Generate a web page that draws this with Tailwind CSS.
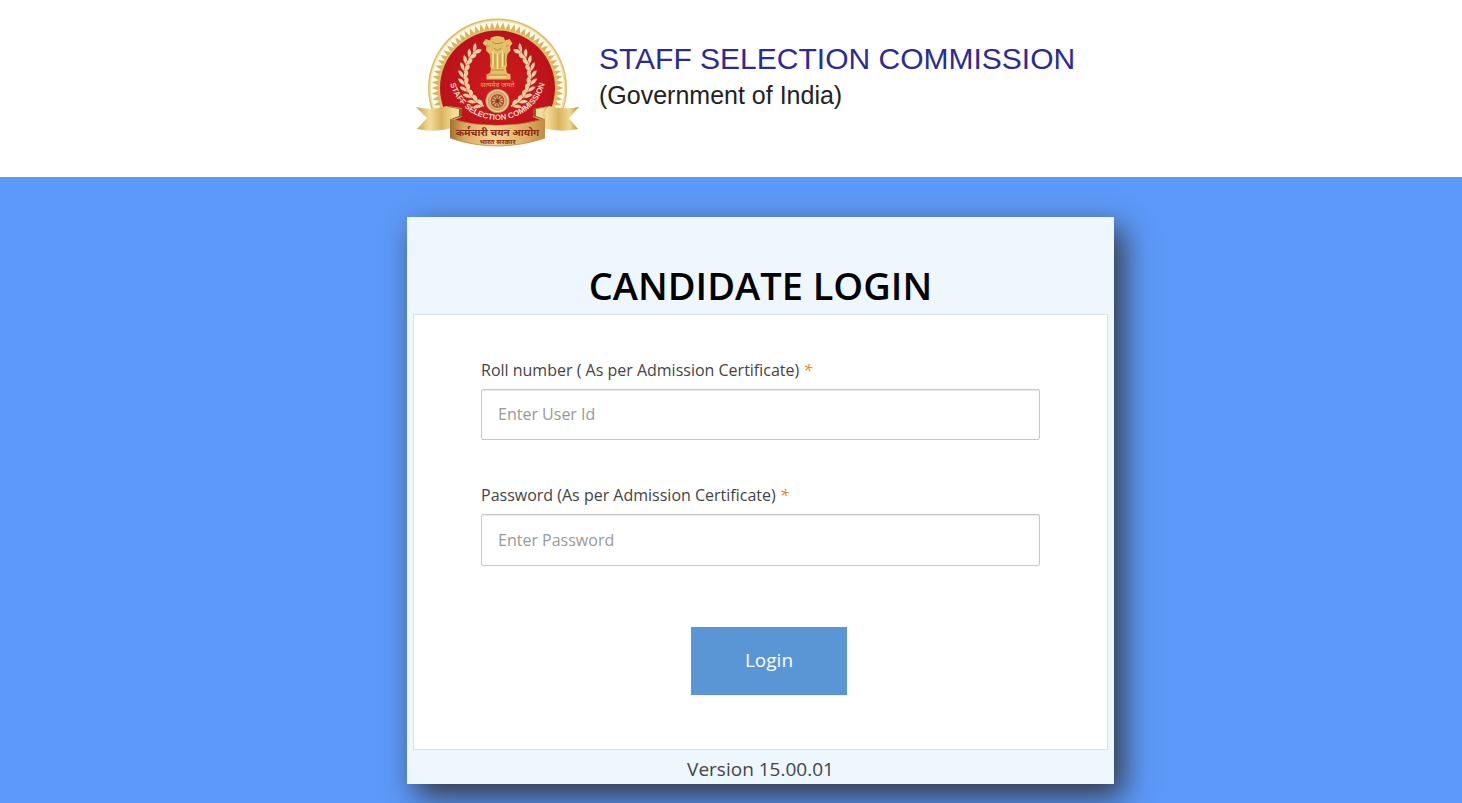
<!DOCTYPE html>
<html lang="en">
<head>
    <meta charset="UTF-8">
    <meta name="viewport" content="width=device-width, initial-scale=1.0">
    <title>Candidate Login</title>
    <script src="https://cdn.jsdelivr.net/npm/@tailwindcss/browser@4"></script>
</head>
<body class="min-h-screen flex flex-col bg-[#5c99f8] font-['Open_Sans',sans-serif] text-[#444]">

    <!-- Header: emblem and name -->
    <header class="bg-white h-[177px] pl-[59px]">
        <div class="w-full max-w-[719px] mx-auto pt-[5px] flex items-start">
            <svg class="w-[190px] h-[150px] shrink-0" viewBox="0 0 190 150" role="img" aria-label="Staff Selection Commission emblem">
                <defs>
                    <linearGradient id="gold" x1="0" x2="1" y1="0" y2="0">
                        <stop offset="0" stop-color="#c9a04c"/>
                        <stop offset=".3" stop-color="#f2dd98"/>
                        <stop offset=".55" stop-color="#d9b45f"/>
                        <stop offset=".8" stop-color="#efd88f"/>
                        <stop offset="1" stop-color="#b98d3d"/>
                    </linearGradient>
                    <linearGradient id="band" x1="0" x2="1" y1="0" y2="0">
                        <stop offset="0" stop-color="#a5702f"/>
                        <stop offset=".15" stop-color="#d9a960"/>
                        <stop offset=".45" stop-color="#f3d595"/>
                        <stop offset=".8" stop-color="#dfae62"/>
                        <stop offset="1" stop-color="#c08a42"/>
                    </linearGradient>
                    <radialGradient id="red">
                        <stop offset="0" stop-color="#cf1b20"/>
                        <stop offset="1" stop-color="#bb1219"/>
                    </radialGradient>
                    <path id="arc" d="M47.500 60V66A49 49 0 0 0 145.500 66V60"/>
                    <clipPath id="disc"><path d="M0 0H190V100L168 102L145 120H48L25 102L0 100Z"/></clipPath>
                </defs>
                <g clip-path="url(#disc)">
                    <circle cx="96.500" cy="83" r="69.500" fill="#d8bd70"/>
                    <circle cx="96.500" cy="83" r="68" fill="#f0e3ae"/>
                    <circle cx="96.500" cy="83" r="66.500" fill="#fdfae8"/>
                    <g id="rays" fill="#d3b65f"></g>
                    <circle cx="96.500" cy="83" r="59" fill="#dcc06d"/>
                    <circle cx="96.500" cy="83" r="57.500" fill="url(#red)"/>
                </g>
                <g id="laurel" fill="#e8cfa2"></g>
                <!-- Lion capital -->
                <path fill="#e3bf69" d="M90 32.500q6.500-3 13 0l1 3 4.500-1.500 3 4.500-2.500 3 .5 4-3 3.500-1 6 .5 5-1 4 1 4 3.500 1.500v5H85.500v-5l3.500-1.500 1-4-1-4 .5-5-1-6-3.500-3.500.5-4-4-3 3-4.500 4.500 1.500z"/>
                <path fill="none" stroke="#b0812f" stroke-width=".8" d="M91 37l3 1.500h5l3-1.500M92.500 43l4 2.500 4-2.500M85.500 40l3 1.500M108 40l-3 1.500M90 48v12M94 49v14M99 49v14M103.500 48v12M90 65h13M87 70h19"/>
                <path fill="none" stroke="#f8e6a5" stroke-width="1" d="M92 46v16M96.500 48v16M101.500 46v16M88 72h17"/>
                <text x="96.500" y="81.500" text-anchor="middle" font-size="7" fill="#e8a080" font-family="Noto Sans, sans-serif">सत्यमेव जयते</text>
                <!-- Wheel -->
                <circle cx="96.500" cy="96" r="12" fill="#cf9d65"/>
                <circle cx="96.500" cy="96" r="10.500" fill="none" stroke="#f0d49a" stroke-width="1.200"/>
                <circle cx="96.500" cy="96" r="7.500" fill="#a95832" stroke="#e9c98d" stroke-width="1"/>
                <circle cx="96.500" cy="96" r="4" fill="none" stroke="#e5bc80" stroke-width="3" stroke-dasharray="1 1.500"/>
                <circle cx="96.500" cy="96" r="1.800" fill="#8d3a20"/>
                <text font-size="8" font-weight="700" fill="#f4d9c4" font-family="Liberation Sans, sans-serif"><textPath href="#arc" startOffset="50%" text-anchor="middle">STAFF SELECTION COMMISSION</textPath></text>
                <!-- Ribbon -->
                <path fill="url(#gold)" d="M15 102Q30 106 46 101L61 103V112L51 116V123Q33 128 16 124L26 113Z"/>
                <path fill="url(#gold)" d="M178 102Q162 105 148 101L132 104V112L142 116V123Q160 128 177 124L168 113Z"/>
                <path fill="#8b5c24" d="M46 101L61 104V111L50 115Q55 109 46 101ZM148 101L132 104V111L143 115Q138 109 148 101Z"/>
                <path fill="#efdc9a" d="M47 102l11 2v7l-8 3q3-6-3-12zM146 102l-11 2v7l8 3q-3-6 3-12z"/>
                <path fill="url(#band)" d="M49 114Q96 127 144 114V133Q96 149 49 133Z"/>
                <path fill="none" stroke="#b98843" stroke-width=".8" d="M49 114Q96 127 144 114M49 133Q96 149 144 133"/>
                <text x="96.500" y="130.500" text-anchor="middle" font-size="10" font-weight="700" fill="#8c2c14" font-family="Noto Sans, sans-serif">कर्मचारी चयन आयोग</text>
                <text x="96.500" y="138.500" text-anchor="middle" font-size="7" font-weight="700" fill="#8c2c14" font-family="Noto Sans, sans-serif">भारत सरकार</text>
            </svg>
            <div class="pt-[35px] pl-2 font-['Liberation_Sans',Arial,sans-serif] whitespace-nowrap">
                <p class="text-[30px] leading-[38px] text-[#2b2c91]">STAFF SELECTION COMMISSION</p>
                <p class="text-[25px] leading-[34px] text-[#222]">(Government of India)</p>
            </div>
        </div>
    </header>

    <!-- Login card -->
    <main class="pt-10 pb-[19px] pl-[59px]">
        <div class="w-full max-w-[707px] mx-auto px-[6px] bg-[#eef6fe] shadow-[9px_12px_28px_rgba(50,50,55,0.95)]">
            <h1 class="pt-11 pb-1 text-center text-[38px] leading-[49px] font-semibold text-black">CANDIDATE LOGIN</h1>
            <form class="bg-white border border-[#d6dfea] px-[67px] pt-10 pb-[54px] flex flex-col">
                <label for="userId" class="text-base leading-[30px]">Roll number ( As per Admission Certificate)<em class="ml-1 text-[#e8801c]">*</em></label>
                <input id="userId" type="text" placeholder="Enter User Id" class="mt-1 h-[51px] w-full rounded-xs border border-[#c4c6c8] px-4 pb-[2px] text-base text-[#444] placeholder:text-[#999] shadow-[inset_0_1px_1px_rgba(0,0,0,0.08)]">
                <label for="password" class="mt-10 text-base leading-[30px]">Password (As per Admission Certificate)<em class="ml-1 text-[#e8801c]">*</em></label>
                <input id="password" type="password" placeholder="Enter Password" class="mt-1 h-[52px] w-full rounded-xs border border-[#c4c6c8] px-4 text-base text-[#444] placeholder:text-[#999] shadow-[inset_0_1px_1px_rgba(0,0,0,0.08)]">
                <div class="mt-[61px] pl-[17px] flex justify-center">
                    <button type="button" class="h-[68px] w-[156px] pb-[2px] bg-[#5a96d6] text-[19px] text-white">Login</button>
                </div>
            </form>
            <p class="pt-1 text-center text-[19px] leading-[30px]">Version 15.00.01</p>
        </div>
    </main>

    <script>
        // Ring of small rays round the emblem
        let rays = '';
        for (let a = 0; a < 360; a += 5) {
            rays += `<path d="M93.700 24.500h5.600l-2.800-7.500z" transform="rotate(${a} 96.500 83)"/>`;
        }
        document.getElementById('rays').innerHTML = rays;

        // Two laurel branches, mirrored left and right
        let leaves = '';
        for (let a = 44; a <= 152; a += 12) {
            for (const s of [1, -1]) {
                leaves += `<g transform="translate(96.500 71) scale(${s} 1) rotate(${a})">
                    <path d="M1-34q-3-5-8-5q1 6 8 5z"/><path d="M1-33q-6-2-8 3q5 3 8-3z"/>
                    <path d="M2-34l-7 1 7 1z"/></g>`;
            }
        }
        document.getElementById('laurel').innerHTML = leaves;
    </script>
</body>
</html>
